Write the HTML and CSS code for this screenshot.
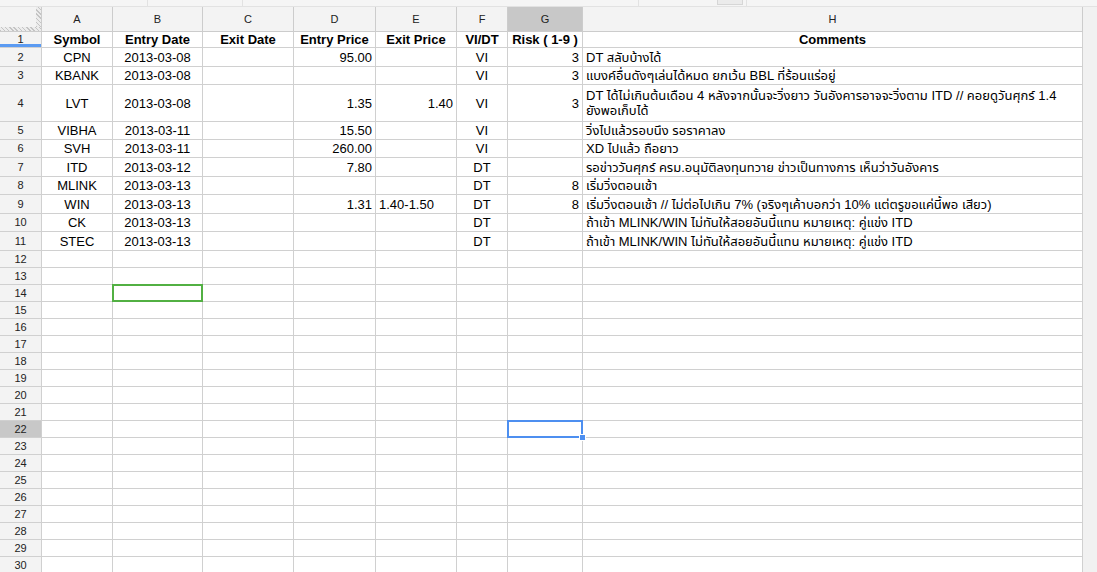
FILE: index.html
```html
<!DOCTYPE html>
<html lang="th">
<head>
  <meta charset="UTF-8" />
  <meta name="viewport" content="width=device-width, initial-scale=1.0" />
  <title>Trading log - Sheet1</title>
  <link rel="stylesheet" href="styles.css">
</head>
<body>
  <div class="topbar">
    <div class="seg seg-1"></div>
    <div class="seg seg-2"></div>
    <div class="seg seg-3"></div>
    <div class="gap"></div>
    <div class="tab-btn"></div>
    <div class="seg seg-4"></div>
  </div>

  <div class="sheet">
    <table class="grid">
      <colgroup>
        <col class="w-rn"><col class="w-a"><col class="w-b"><col class="w-c"><col class="w-d">
        <col class="w-e"><col class="w-f"><col class="w-g"><col class="w-h">
      </colgroup>
      <thead>
        <tr class="heads">
          <th class="corner"></th>
          <th>A</th><th>B</th><th>C</th><th>D</th><th>E</th><th>F</th><th class="picked">G</th><th>H</th>
        </tr>
      </thead>
      <tbody>
        <tr class="h16 title">
          <th class="rn frozen">1</th>
          <td>Symbol</td><td>Entry Date</td><td>Exit Date</td><td>Entry Price</td><td>Exit Price</td><td>VI/DT</td><td>Risk ( 1-9 )</td><td>Comments</td>
        </tr>
        <tr class="h19">
          <th class="rn">2</th>
          <td class="c">CPN</td><td class="c">2013-03-08</td><td></td><td class="r">95.00</td><td></td><td class="c">VI</td><td class="r">3</td><td>DT สลับบ้างได้</td>
        </tr>
        <tr class="h18">
          <th class="rn">3</th>
          <td class="c">KBANK</td><td class="c">2013-03-08</td><td></td><td></td><td></td><td class="c">VI</td><td class="r">3</td><td>แบงค์อื่นดังๆเล่นได้หมด ยกเว้น BBL ที่ร้อนแร่อยู่</td>
        </tr>
        <tr class="h37">
          <th class="rn">4</th>
          <td class="c">LVT</td><td class="c">2013-03-08</td><td></td><td class="r">1.35</td><td class="r">1.40</td><td class="c">VI</td><td class="r">3</td>
          <td class="wrap">DT ได้ไม่เกินต้นเดือน 4 หลังจากนั้นจะวิ่งยาว วันอังคารอาจจะวิ่งตาม ITD // คอยดูวันศุกร์ 1.4<br>ยังพอเก็บได้</td>
        </tr>
        <tr class="h18">
          <th class="rn">5</th>
          <td class="c">VIBHA</td><td class="c">2013-03-11</td><td></td><td class="r">15.50</td><td></td><td class="c">VI</td><td></td><td>วิ่งไปแล้วรอบนึง รอราคาลง</td>
        </tr>
        <tr class="h18">
          <th class="rn">6</th>
          <td class="c">SVH</td><td class="c">2013-03-11</td><td></td><td class="r">260.00</td><td></td><td class="c">VI</td><td></td><td>XD ไปแล้ว ถือยาว</td>
        </tr>
        <tr class="h19">
          <th class="rn">7</th>
          <td class="c">ITD</td><td class="c">2013-03-12</td><td></td><td class="r">7.80</td><td></td><td class="c">DT</td><td></td><td>รอข่าววันศุกร์ ครม.อนุมัติลงทุนทวาย ข่าวเป็นทางการ เห็นว่าวันอังคาร</td>
        </tr>
        <tr class="h18">
          <th class="rn">8</th>
          <td class="c">MLINK</td><td class="c">2013-03-13</td><td></td><td></td><td></td><td class="c">DT</td><td class="r">8</td><td>เริ่มวิ่งตอนเช้า</td>
        </tr>
        <tr class="h19">
          <th class="rn">9</th>
          <td class="c">WIN</td><td class="c">2013-03-13</td><td></td><td class="r">1.31</td><td>1.40-1.50</td><td class="c">DT</td><td class="r">8</td><td>เริ่มวิ่งตอนเช้า // ไม่ต่อไปเกิน 7% (จริงๆเค้าบอกว่า 10% แต่ตรูขอแค่นี้พอ เสียว)</td>
        </tr>
        <tr class="h18">
          <th class="rn">10</th>
          <td class="c">CK</td><td class="c">2013-03-13</td><td></td><td></td><td></td><td class="c">DT</td><td></td><td>ถ้าเข้า MLINK/WIN ไม่ทันให้สอยอันนี้แทน หมายเหตุ: คู่แข่ง ITD</td>
        </tr>
        <tr class="h19">
          <th class="rn">11</th>
          <td class="c">STEC</td><td class="c">2013-03-13</td><td></td><td></td><td></td><td class="c">DT</td><td></td><td>ถ้าเข้า MLINK/WIN ไม่ทันให้สอยอันนี้แทน หมายเหตุ: คู่แข่ง ITD</td>
        </tr>
        <tr class="h17"><th class="rn">12</th><td></td><td></td><td></td><td></td><td></td><td></td><td></td><td></td></tr>
        <tr class="h17"><th class="rn">13</th><td></td><td></td><td></td><td></td><td></td><td></td><td></td><td></td></tr>
        <tr class="h17"><th class="rn">14</th><td></td><td class="copy-range"></td><td></td><td></td><td></td><td></td><td></td><td></td></tr>
        <tr class="h17"><th class="rn">15</th><td></td><td></td><td></td><td></td><td></td><td></td><td></td><td></td></tr>
        <tr class="h17"><th class="rn">16</th><td></td><td></td><td></td><td></td><td></td><td></td><td></td><td></td></tr>
        <tr class="h17"><th class="rn">17</th><td></td><td></td><td></td><td></td><td></td><td></td><td></td><td></td></tr>
        <tr class="h17"><th class="rn">18</th><td></td><td></td><td></td><td></td><td></td><td></td><td></td><td></td></tr>
        <tr class="h17"><th class="rn">19</th><td></td><td></td><td></td><td></td><td></td><td></td><td></td><td></td></tr>
        <tr class="h17"><th class="rn">20</th><td></td><td></td><td></td><td></td><td></td><td></td><td></td><td></td></tr>
        <tr class="h17"><th class="rn">21</th><td></td><td></td><td></td><td></td><td></td><td></td><td></td><td></td></tr>
        <tr class="h17"><th class="rn picked">22</th><td></td><td></td><td></td><td></td><td></td><td></td><td class="active"><span class="handle"></span></td><td></td></tr>
        <tr class="h17"><th class="rn">23</th><td></td><td></td><td></td><td></td><td></td><td></td><td></td><td></td></tr>
        <tr class="h17"><th class="rn">24</th><td></td><td></td><td></td><td></td><td></td><td></td><td></td><td></td></tr>
        <tr class="h17"><th class="rn">25</th><td></td><td></td><td></td><td></td><td></td><td></td><td></td><td></td></tr>
        <tr class="h17"><th class="rn">26</th><td></td><td></td><td></td><td></td><td></td><td></td><td></td><td></td></tr>
        <tr class="h17"><th class="rn">27</th><td></td><td></td><td></td><td></td><td></td><td></td><td></td><td></td></tr>
        <tr class="h17"><th class="rn">28</th><td></td><td></td><td></td><td></td><td></td><td></td><td></td><td></td></tr>
        <tr class="h17"><th class="rn">29</th><td></td><td></td><td></td><td></td><td></td><td></td><td></td><td></td></tr>
        <tr class="h17"><th class="rn">30</th><td></td><td></td><td></td><td></td><td></td><td></td><td></td><td></td></tr>
      </tbody>
    </table>
    <div class="track"></div>
  </div>
</body>
</html>
```

FILE: styles.css
```css
body {
  margin: 0;
  font-family: "Liberation Sans", Arial, "Noto Sans Thai", Tahoma, sans-serif;
  font-size: 13px;
  color: #000;
  background-color: #f1f1f1;
  overflow: hidden;
}
.topbar {
  display: flex;
  height: 6px;
  background-color: #f5f5f5;
  border-bottom: 1px solid #e2e2e2;
}
.seg {
  border-right: 1px solid #e2e2e2;
}
.seg-1 { width: 147px; }
.seg-2 { width: 94px; }
.seg-3 { width: 395px; }
.gap { width: 78px; }
.tab-btn {
  width: 24px;
  height: 4px;
  background-color: #ebebeb;
  border: 1px solid #d6d6d6;
  border-top: none;
}
.seg-4 { width: 3px; }
.sheet {
  display: flex;
}
.grid {
  border-collapse: separate;
  border-spacing: 0;
  table-layout: fixed;
  width: 1083px;
  background-color: #fff;
}
.w-rn { width: 42px; }
.w-a { width: 71px; }
.w-b { width: 90px; }
.w-c { width: 91px; }
.w-d { width: 82px; }
.w-e { width: 81px; }
.w-f { width: 51px; }
.w-g { width: 75px; }
.w-h { width: 500px; }
.grid th, .grid td {
  border-right: 1px solid #d0d0d0;
  border-bottom: 1px solid #d0d0d0;
  padding: 0 3px;
  white-space: nowrap;
  overflow: hidden;
  vertical-align: middle;
  line-height: 15px;
}
.heads th {
  height: 24px;
  background-color: #f3f3f3;
  font-size: 11px;
  font-weight: normal;
  color: #222;
  border-color: #cccccc;
}
.heads th.picked, .rn.picked {
  background-color: #c8c8c8;
}
.corner {
  position: relative;
}
.corner::before {
  content: "";
  position: absolute;
  top: 0;
  right: 0;
  width: 5px;
  bottom: 4px;
  background: repeating-linear-gradient(45deg, #c4c4c4 0 1px, #ececec 1px 3px);
}
.corner::after {
  content: "";
  position: absolute;
  left: 0;
  right: 0;
  bottom: 0;
  height: 4px;
  background: repeating-linear-gradient(45deg, #c4c4c4 0 1px, #ececec 1px 3px);
}
.rn {
  background-color: #f3f3f3;
  font-size: 11px;
  font-weight: normal;
  color: #222;
  text-align: center;
  border-color: #cccccc;
}
.rn.frozen {
  box-shadow: inset 0 -3px 0 #5b9bf2;
}
.h16 { height: 16px; }
.h17 { height: 17px; }
.h18 { height: 18px; }
.h19 { height: 19px; }
.h37 { height: 37px; }
.title td {
  font-weight: bold;
  text-align: center;
}
.c { text-align: center; }
.r { text-align: right; }
.wrap {
  line-height: 18px;
}
.copy-range, .active {
  position: relative;
  overflow: visible !important;
}
.copy-range::after {
  content: "";
  position: absolute;
  left: -1px;
  top: -1px;
  right: -1px;
  bottom: -1px;
  border: 2px solid #52b043;
}
.active::after {
  content: "";
  position: absolute;
  left: -1px;
  top: -1px;
  right: -1px;
  bottom: -1px;
  border: 2px solid #4d8ff0;
}
.handle {
  position: absolute;
  right: -4px;
  bottom: -4px;
  width: 5px;
  height: 5px;
  background-color: #4d8ff0;
  border: 1px solid #fff;
  z-index: 1;
}
.track {
  flex: 1;
  background-color: #f1f1f1;
}
```
